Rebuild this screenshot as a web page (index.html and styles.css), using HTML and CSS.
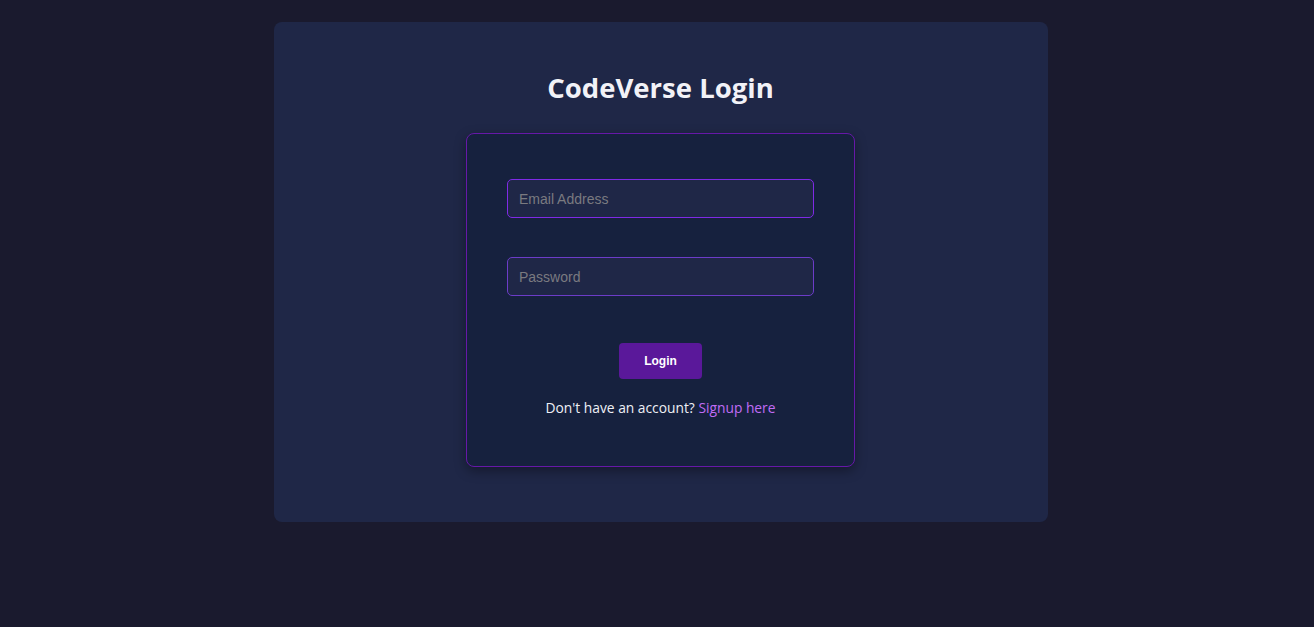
FILE: index.html
```html
<!DOCTYPE html>
<html>
<head>
<meta charset="utf-8">
<title>CodeVerse Login</title>
<link rel="stylesheet" href="styles.css">
</head>
<body>
<main class="panel">
  <h1 class="title">CodeVerse Login</h1>
  <form class="card">
    <input class="field field-email" type="email" placeholder="Email Address">
    <input class="field field-pass" type="password" placeholder="Password">
    <button class="btn" type="button">Login</button>
    <p class="note">Don't have an account? <a class="link" href="#">Signup here</a></p>
  </form>
</main>
</body>
</html>
```
FILE: styles.css
```css
html, body {
  margin: 0;
  padding: 0;
  background: #1a1a2e;
  height: 100%;
}
body {
  padding-top: 22px;
  padding-left: 8px;
  box-sizing: border-box;
}
.panel {
  width: 774px;
  height: 500px;
  margin: 0 auto;
  box-sizing: border-box;
  background: #1f2747;
  border-radius: 8px;
  display: flex;
  flex-direction: column;
  align-items: center;
  padding-top: 49px;
  padding-right: 1px;
}
.title {
  margin: 0;
  font-family: "Open Sans", "Noto Sans", sans-serif;
  font-weight: 700;
  font-size: 27.5px;
  line-height: 34px;
  color: #f2f2f7;
}
.card {
  margin-top: 28px;
  width: 389px;
  box-sizing: border-box;
  background: #16213e;
  border: 1px solid #6618a8;
  border-radius: 8px;
  padding: 45px 40px 49px;
  display: flex;
  flex-direction: column;
  align-items: center;
  box-shadow: 0 4px 12px rgba(0,0,0,0.35);
}
.field {
  display: block;
  width: 100%;
  height: 39px;
  box-sizing: border-box;
  background-color: #1f2747;
  border-width: 1px;
  border-style: solid;
  border-radius: 5px;
  padding: 0 11px;
  font-family: "Liberation Sans", Arial, sans-serif;
  font-size: 14px;
  color: #ddd;
  outline: none;
  -webkit-appearance: none;
  appearance: none;
}
.field-email {
  border-color: #7f2ae6;
}
.field-pass {
  border-color: #6c3cc8;
  margin-top: 39px;
}
.field::placeholder {
  color: #7a7a80;
}
.btn {
  margin-top: 47px;
  width: 83px;
  height: 36px;
  border: none;
  border-radius: 4px;
  background: #5a189a;
  color: #fff;
  font-family: "Liberation Sans", Arial, sans-serif;
  font-weight: 700;
  font-size: 12px;
  cursor: pointer;
}
.note {
  margin: 20px 0 0;
  font-family: "Open Sans", "Noto Sans", sans-serif;
  font-size: 13.8px;
  line-height: 18px;
  color: #eef0f5;
}
.link {
  color: #c06cf5;
  text-decoration: none;
}
```
